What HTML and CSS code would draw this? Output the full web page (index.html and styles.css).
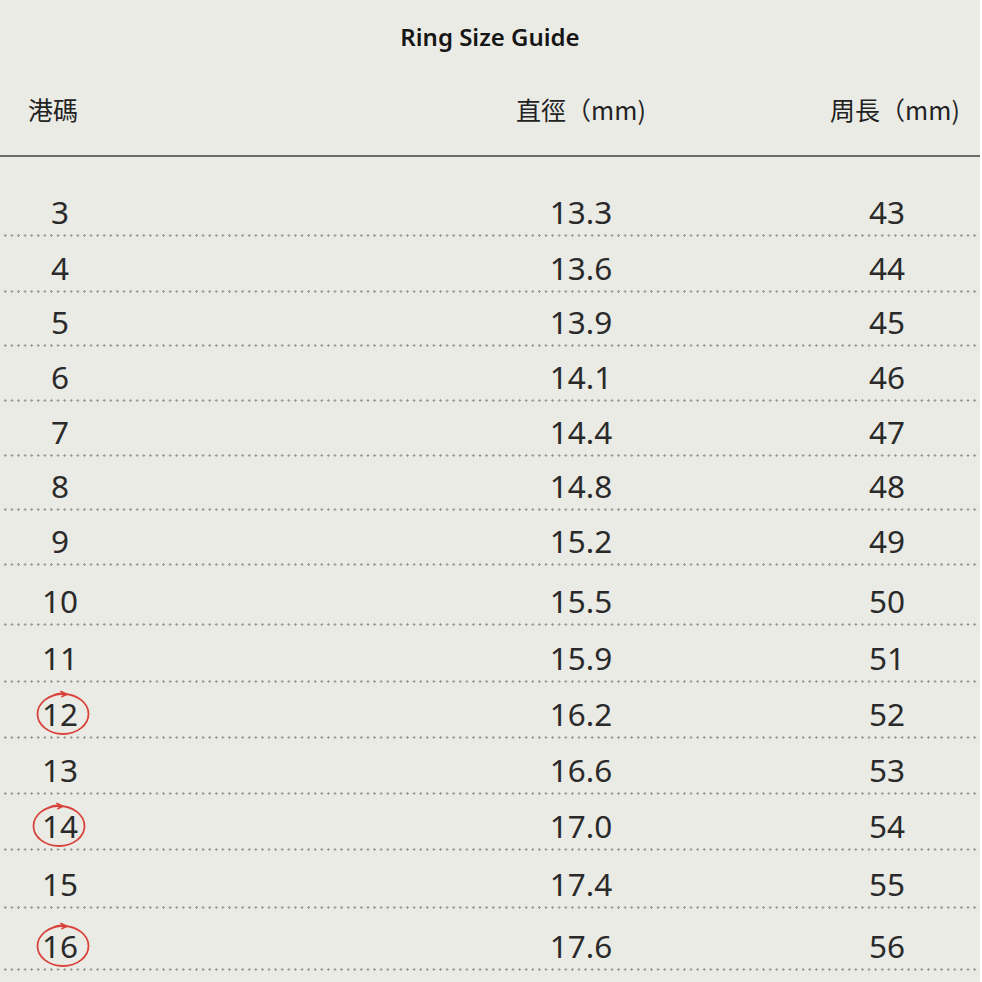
FILE: index.html
```html
<!DOCTYPE html>
<html lang="zh-Hant">
<head>
<meta charset="utf-8">
<title>Ring Size Guide</title>
<link rel="stylesheet" href="styles.css">
</head>
<body>
<div class="page">
  <h1 class="title">Ring Size Guide</h1>
  <div class="head">
    <div class="c1 h">港碼</div>
    <div class="c2 h">直徑（mm)</div>
    <div class="c3 h">周長（mm)</div>
  </div>
  <div class="rows">
    <div class="row"><div class="c1">3</div><div class="c2">13.3</div><div class="c3">43</div></div>
    <div class="row"><div class="c1">4</div><div class="c2">13.6</div><div class="c3">44</div></div>
    <div class="row"><div class="c1">5</div><div class="c2">13.9</div><div class="c3">45</div></div>
    <div class="row"><div class="c1">6</div><div class="c2">14.1</div><div class="c3">46</div></div>
    <div class="row"><div class="c1">7</div><div class="c2">14.4</div><div class="c3">47</div></div>
    <div class="row"><div class="c1">8</div><div class="c2">14.8</div><div class="c3">48</div></div>
    <div class="row"><div class="c1">9</div><div class="c2">15.2</div><div class="c3">49</div></div>
    <div class="row"><div class="c1">10</div><div class="c2">15.5</div><div class="c3">50</div></div>
    <div class="row"><div class="c1">11</div><div class="c2">15.9</div><div class="c3">51</div></div>
    <div class="row"><div class="c1 marked">12<svg class="ring" viewBox="0 0 56 50" aria-hidden="true"><ellipse cx="28" cy="27" rx="25.5" ry="20"/><path d="M20 7.5 Q27 5.5 32 7.2 M26 4.5 L32 7.2 L27 9.5"/></svg></div><div class="c2">16.2</div><div class="c3">52</div></div>
    <div class="row"><div class="c1">13</div><div class="c2">16.6</div><div class="c3">53</div></div>
    <div class="row"><div class="c1 marked">14<svg class="ring r14" viewBox="0 0 56 50" aria-hidden="true"><ellipse cx="28" cy="27" rx="25.5" ry="20"/><path d="M20 7.5 Q27 5.5 32 7.2 M26 4.5 L32 7.2 L27 9.5"/></svg></div><div class="c2">17.0</div><div class="c3">54</div></div>
    <div class="row"><div class="c1">15</div><div class="c2">17.4</div><div class="c3">55</div></div>
    <div class="row"><div class="c1 marked">16<svg class="ring" viewBox="0 0 56 50" aria-hidden="true"><ellipse cx="28" cy="27" rx="25.5" ry="20"/><path d="M20 7.5 Q27 5.5 32 7.2 M26 4.5 L32 7.2 L27 9.5"/></svg></div><div class="c2">17.6</div><div class="c3">56</div></div>
  </div>
</div>
</body>
</html>
```

FILE: styles.css
```css
html, body {
  margin: 0;
  padding: 0;
  background: #ffffff;
}

.page {
  width: 980px;
  height: 982px;
  overflow: hidden;
  background: #ebebe6;
  font-family: "Noto Sans", "Noto Sans CJK TC", sans-serif;
  color: #2a2a2a;
}

.title {
  margin: 0;
  padding-top: 21px;
  height: 32px;
  line-height: 32px;
  text-align: center;
  font-size: 24px;
  font-weight: 600;
  color: #161616;
}

.head,
.row {
  display: grid;
  grid-template-columns: 120px 1fr 186px;
}

.head {
  margin-top: 39px;
  height: 38px;
  line-height: 34px;
  padding-bottom: 25px;
  border-bottom: 2px solid #6c6c6c;
}

.h {
  font-family: "Noto Sans CJK TC", "Noto Sans", sans-serif;
  font-size: 25px;
  color: #222;
}

.c1 {
  text-align: center;
  position: relative;
}

.c2 {
  text-align: center;
  padding-left: 248px;
}

.c3 {
  text-align: center;
}

.head .c1 {
  text-align: left;
  padding-left: 28px;
}

.head .c3 {
  padding-left: 16px;
}

.rows {
  padding-top: 23px;
}

.row {
  align-items: end;
  height: 56px;
  box-sizing: border-box;
  padding-bottom: 8px;
  font-size: 31.5px;
  line-height: 34px;
  background-image: radial-gradient(circle, #9a9a97 1px, transparent 1.4px);
  background-size: 6.6px 3px;
  background-repeat: repeat-x;
  background-position: 2px 100%;
}

.row:nth-child(1) { height: 57px; }
.row:nth-child(2) { height: 56px; }
.row:nth-child(3) { height: 54px; }
.row:nth-child(4) { height: 55px; }
.row:nth-child(5) { height: 55px; }
.row:nth-child(6) { height: 54px; }
.row:nth-child(7) { height: 55px; }
.row:nth-child(8) { height: 60px; }
.row:nth-child(9) { height: 57px; }
.row:nth-child(10) { height: 56px; }
.row:nth-child(11) { height: 56px; }
.row:nth-child(12) { height: 56px; }
.row:nth-child(13) { height: 58px; }
.row:nth-child(14) { height: 62px; }

.ring {
  position: absolute;
  left: 35px;
  top: -10px;
  width: 56px;
  height: 50px;
  fill: none;
  stroke: #d8443c;
  stroke-width: 1.8;
  stroke-linecap: round;
  stroke-linejoin: round;
}

.ring.r14 {
  left: 31px;
}
```
